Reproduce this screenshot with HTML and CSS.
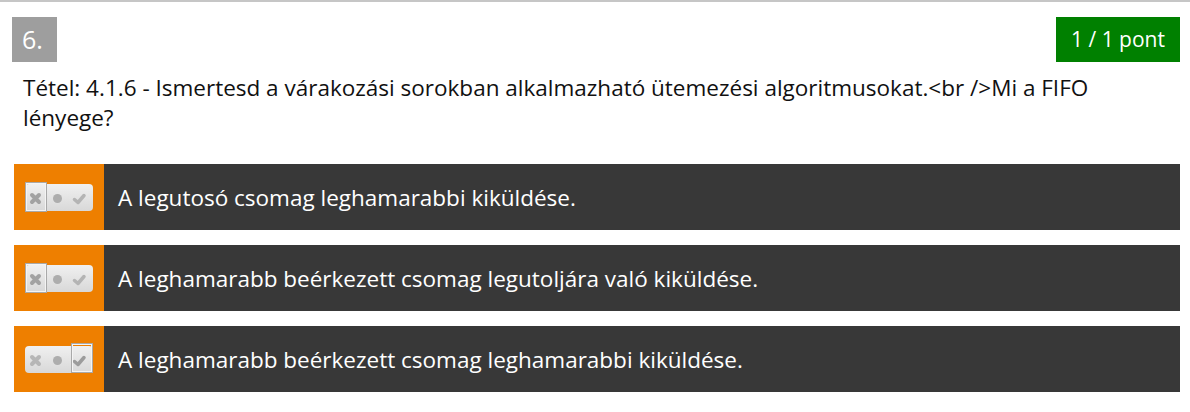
FILE: index.html
```html
<!DOCTYPE html>
<html lang="hu">
<head>
<meta charset="utf-8">
<link rel="stylesheet" href="styles.css">
</head>
<body>
<div class="question">
  <div class="head">
    <div class="num">6.</div>
    <div class="points">1 / 1 pont</div>
  </div>
  <p class="text">Tétel: 4.1.6 - Ismertesd a várakozási sorokban alkalmazható ütemezési algoritmusokat.&lt;br /&gt;Mi a FIFO lényege?</p>
  <div class="answers">
    <div class="answer">
      <div class="mark">
        <svg class="toggle" width="70" height="32" viewBox="0 0 70 32">
          <defs><linearGradient id="g1" x1="0" y1="0" x2="0" y2="1"><stop offset="0" stop-color="#f0f0f0"/><stop offset="1" stop-color="#d8d8d8"/></linearGradient></defs>
          <rect x="0" y="3" width="68" height="27" rx="4" fill="url(#g1)"/>
          <path d="M7 14 L14 21 M14 14 L7 21" stroke="#a2a2a2" stroke-width="4" stroke-linecap="round"/>
          <circle cx="32.5" cy="17.5" r="4.5" fill="#adadad"/>
          <path d="M49.5 18.5 L53 21.5 L59 14.5" stroke="#b4b4b4" stroke-width="3.5" fill="none" stroke-linecap="round" stroke-linejoin="round"/>
          <rect x="0.5" y="1.5" width="21" height="29" fill="none" stroke="#a9a9a9" stroke-width="1"/>
          <rect x="1.5" y="2.5" width="19" height="27" fill="none" stroke="#f4f4f4" stroke-width="1"/>
        </svg>
      </div>
      <div class="label">A legutosó csomag leghamarabbi kiküldése.</div>
    </div>
    <div class="answer">
      <div class="mark">
        <svg class="toggle" width="70" height="32" viewBox="0 0 70 32">
          <defs><linearGradient id="g2" x1="0" y1="0" x2="0" y2="1"><stop offset="0" stop-color="#f0f0f0"/><stop offset="1" stop-color="#d8d8d8"/></linearGradient></defs>
          <rect x="0" y="3" width="68" height="27" rx="4" fill="url(#g2)"/>
          <path d="M7 14 L14 21 M14 14 L7 21" stroke="#a2a2a2" stroke-width="4" stroke-linecap="round"/>
          <circle cx="32.5" cy="17.5" r="4.5" fill="#adadad"/>
          <path d="M49.5 18.5 L53 21.5 L59 14.5" stroke="#b4b4b4" stroke-width="3.5" fill="none" stroke-linecap="round" stroke-linejoin="round"/>
          <rect x="0.5" y="1.5" width="21" height="29" fill="none" stroke="#a9a9a9" stroke-width="1"/>
          <rect x="1.5" y="2.5" width="19" height="27" fill="none" stroke="#f4f4f4" stroke-width="1"/>
        </svg>
      </div>
      <div class="label">A leghamarabb beérkezett csomag legutoljára való kiküldése.</div>
    </div>
    <div class="answer">
      <div class="mark">
        <svg class="toggle" width="70" height="32" viewBox="0 0 70 32">
          <defs><linearGradient id="g3" x1="0" y1="0" x2="0" y2="1"><stop offset="0" stop-color="#f0f0f0"/><stop offset="1" stop-color="#d8d8d8"/></linearGradient></defs>
          <rect x="0" y="3" width="68" height="27" rx="4" fill="url(#g3)"/>
          <path d="M7 14 L14 21 M14 14 L7 21" stroke="#b6b6b6" stroke-width="4" stroke-linecap="round"/>
          <circle cx="32.5" cy="17.5" r="4.5" fill="#adadad"/>
          <path d="M49.5 18.5 L53 21.5 L59 14.5" stroke="#9c9c9c" stroke-width="3.5" fill="none" stroke-linecap="round" stroke-linejoin="round"/>
          <rect x="46.5" y="0.5" width="21" height="29" fill="none" stroke="#a9a9a9" stroke-width="1"/>
          <rect x="47.5" y="1.5" width="19" height="27" fill="none" stroke="#f4f4f4" stroke-width="1"/>
        </svg>
      </div>
      <div class="label">A leghamarabb beérkezett csomag leghamarabbi kiküldése.</div>
    </div>
  </div>
</div>
</body>
</html>
```

FILE: styles.css
```css
html, body {
  margin: 0;
  padding: 0;
  background: #ffffff;
}
body {
  font-family: "Open Sans", "Liberation Sans", sans-serif;
  color: #111111;
}
.question {
  border-top: 2px solid #c6c6c6;
  padding: 15px 10px 20px 12px;
}
.head {
  display: flex;
  justify-content: space-between;
  align-items: flex-start;
}
.num {
  width: 45px;
  height: 45px;
  background: #9e9e9e;
  color: #ffffff;
  font-size: 25px;
  line-height: 45px;
  box-sizing: border-box;
  padding-left: 10px;
}
.points {
  height: 45px;
  width: 124px;
  background: #008000;
  color: #ffffff;
  font-size: 21px;
  line-height: 45px;
  text-align: center;
}
.text {
  margin: 11px 0 0 11px;
  font-size: 22.5px;
  line-height: 30px;
  padding-right: 30px;
}
.answers {
  margin: 31px 0 0 2px;
  display: flex;
  flex-direction: column;
  gap: 15px;
}
.answer {
  display: flex;
  height: 66px;
  background: #383838;
}
.mark {
  width: 90px;
  background: #ee7f00;
  display: flex;
  align-items: center;
  padding-left: 11px;
  box-sizing: border-box;
}
.toggle {
  display: block;
}
.label {
  color: #ffffff;
  font-size: 22.5px;
  display: flex;
  align-items: center;
  padding-left: 14px;
}
```
